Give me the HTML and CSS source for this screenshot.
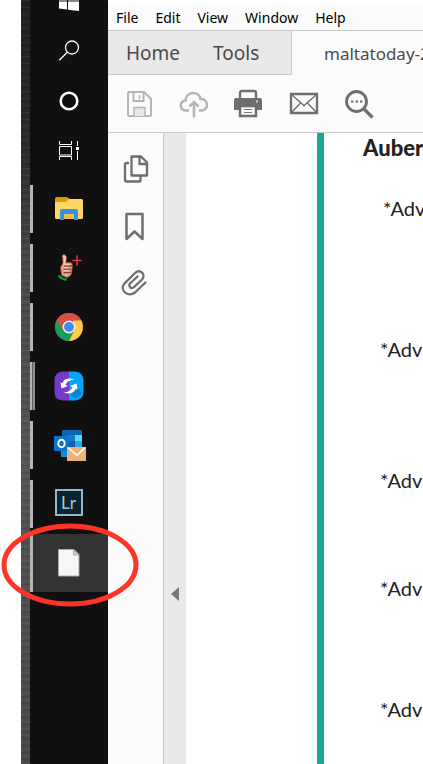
FILE: index.html
```
<!DOCTYPE html>
<html lang="en">
<head>
    <meta charset="UTF-8">
    <meta name="viewport" content="width=device-width, initial-scale=1.0">
    <title>maltatoday</title>
    <link rel="stylesheet" href="styles.css">
</head>
<body>
    <div class="screen">
        <div class="desktop-edge"></div>

        <!-- Windows taskbar -->
        <nav class="taskbar" aria-label="Taskbar">
            <button class="sys start" aria-label="Start">
                <svg width="20" height="20" viewBox="0 0 20 20" fill="#fff"><path d="M0 1.400H8V9.500H0zM9 1H20V9.500H9zM0 10.500H8V18.500L0 17.600zM9 10.500H20V20L9 18.700z"/></svg>
            </button>
            <button class="sys" aria-label="Search">
                <svg width="22" height="22" viewBox="0 0 22 22" fill="none" stroke="#fff" stroke-width="1.300"><circle cx="14" cy="7.500" r="6.500"/><path d="M9.300 12.200 1.300 20.200"/></svg>
            </button>
            <button class="sys" aria-label="Cortana">
                <svg width="22" height="22" viewBox="0 0 22 22" fill="none" stroke="#fff"><circle cx="11" cy="11" r="8.300" stroke-width="2.600"/></svg>
            </button>
            <button class="sys" aria-label="Task View">
                <svg width="22" height="22" viewBox="0 0 22 22" fill="none" stroke="#fff"><path d="M1.500 1V4.500H13.500V1M1.500 6.500H13.500V15H1.500zM1.500 20V16.500H13.500V20M19.500 1V6M19.500 11V20"/><path d="M18 7h3v3h-3z" fill="#fff" stroke="none"/></svg>
            </button>

            <div class="apps">
                <button class="app" aria-label="File Explorer">
                    <svg width="32" height="32" viewBox="0 0 32 32"><path d="M2 6q0-2 2-2h9q2 0 3 1.500L17 9H2z" fill="#df9b05"/><path d="M2 9h11l3-3h12.500Q30 6 30 8v16.500q0 1.500-1.500 1.500h-25Q2 26 2 24.500z" fill="#ffd766"/><path d="M7 27V18q0-2 2-2h14q2 0 2 2v9h-4v-6h-10v6z" fill="#3394dc"/><path d="M11 21h10v5H11z" fill="#eebf4f"/></svg>
                </button>
                <button class="app" aria-label="Thumbs Plus">
                    <svg width="32" height="32" viewBox="0 0 32 32"><path d="M9 3.500q2-2 4 0l.7 3-.7 4 4-.2q3 .6 2.600 4l-1 7.500q-2 3.500-5 3.700l-5-2-1.300-8L10 11z" fill="#e9a389" stroke="#7a3329" stroke-width=".7"/><path d="M10 4.500q1.500-1 2 1L11 12" fill="none" stroke="#ffd9c4" stroke-width="1.300"/><path d="M11 14h8M10.500 17.200h8M10.500 20.500h7.500" stroke="#873e32" stroke-width="1.300"/><path d="M11 12.600h6M11 15.700h5M11 18.900h5" stroke="#ffd2b8" stroke-width="1.200"/><path d="M5.500 23.500q3.500 4.200 8.500 4" fill="none" stroke="#159445" stroke-width="2.300"/><path d="M24 3v11M18.800 8.500h10" stroke="#861820" stroke-width="2"/><path d="M24 4v9M19.500 8.500H28" stroke="#f14b50" stroke-width=".8"/></svg>
                </button>
                <button class="app" aria-label="Chrome">
                    <svg width="32" height="32" viewBox="0 0 32 32"><circle cx="16" cy="16" r="14" fill="#d94f43"/><path d="M28 9A14 14 0 0 1 16 30l-1-8 6-6-1-7z" fill="#ffce44"/><path d="M3.900 9A14 14 0 0 0 16 30l5.300-10.500L10 19z" fill="#159d59"/><path d="M16 9.500h12.400A14 14 0 0 0 3.900 9L10.500 19.500z" fill="#d94f43"/><circle cx="16" cy="16" r="6.500" fill="#f1f3f6"/><circle cx="16" cy="16" r="5" fill="#4a87ef"/></svg>
                </button>
                <button class="app stacked" aria-label="Sync">
                    <svg width="32" height="32" viewBox="0 0 32 32"><path d="M16 1.500H9Q1.500 2.500 1.500 10v12q0 8 8 8.500H16z" fill="#743acb"/><path d="M16 1.500h6q8 .5 8.500 8.500v12q-.5 8-8.500 8.500h-6z" fill="#08a4fa"/><path d="m16 22 5 6q5 0 8-5L24 17z" fill="#0784cc"/><path d="M21.500 9.500Q12 6.500 9.500 13L7.500 12.500 8.500 18.500 15 16l-2.500-1.200Q14.500 10 21.500 9.500zM10.500 22.500q9.500 3 12-3.500l2 .5L23.500 13.500 17 16l2.500 1.200Q17.500 22 10.500 22.500z" fill="#fff"/></svg>
                </button>
                <button class="app" aria-label="Outlook">
                    <svg width="34" height="34" viewBox="0 0 34 34"><path d="M10 2h20v18H10z" fill="#0a65b0"/><path d="M16 7h7v6h-7z" fill="#167ac8"/><path d="M23 7h7v6h-7z" fill="#54dcfc"/><path d="M16 13h7v6h-7z" fill="#1261ae"/><path d="M23 13h7v6h-7z" fill="#29aaf0"/><path d="M9 17h7v12H9z" fill="#1489dc"/><rect x="2" y="8" width="15" height="15" rx="1" fill="#0875cf"/><ellipse cx="9.500" cy="15.500" rx="3.200" ry="3.800" fill="none" stroke="#fff" stroke-width="2"/><path d="M15 19h19v14H15z" fill="#eab477"/><path d="m16 19.500 9 8 8-8" fill="none" stroke="#fff" stroke-width="1.300"/></svg>
                </button>
                <button class="app" aria-label="Lightroom">
                    <svg width="32" height="32" viewBox="0 0 32 32"><rect x="3" y="2" width="26" height="25" fill="#0b232e" stroke="#a4c8df" stroke-width="1.800"/><text x="8" y="21" class="lr">Lr</text></svg>
                </button>
                <button class="app active" aria-label="Document">
                    <svg width="32" height="32" viewBox="0 0 32 32"><path d="M5.500 2.500h15.500l5 5v21.500H5.500z" fill="#f6f6f6" stroke="#aaaaa2"/><path d="M20.500 3v5H26z" fill="#d4d4d0" stroke="#999992" stroke-width=".7"/></svg>
                    <svg class="marker" width="138" height="84" viewBox="0 0 138 84"><ellipse cx="69" cy="42" rx="66" ry="39" fill="none" stroke="#ff3429" stroke-width="5"/></svg>
                </button>
            </div>
        </nav>

        <!-- PDF reader window -->
        <div class="window">
            <div class="menubar">
                <button>File</button>
                <button>Edit</button>
                <button>View</button>
                <button>Window</button>
                <button>Help</button>
            </div>
            <div class="tabs">
                <div class="tabs-main">
                    <button>Home</button>
                    <button>Tools</button>
                </div>
                <button class="tab-file">maltatoday-2</button>
            </div>
            <div class="toolbar">
                <button aria-label="Save">
                    <svg width="30" height="30" viewBox="0 0 30 30" fill="none" stroke="#b5b5b5" stroke-width="2"><path d="M5 3H20L27 10V26Q27 27 26 27H5Q4 27 4 26V4Q4 3 5 3z"/><path d="M9.500 3V12H19.500V3"/><path d="M10 27V18.500H21V27" fill="#e8e8e8" stroke-width="1.500"/><path d="M15.500 6V10" stroke-width="1.500"/></svg>
                </button>
                <button aria-label="Upload">
                    <svg width="30" height="30" viewBox="0 0 30 30" fill="none" stroke="#b5b5b5" stroke-width="2.500"><path d="M10 21.500H7A5 5 0 0 1 6.500 11.500C7 2 20 1.500 21.500 10A5.500 5.500 0 0 1 23 21.500H20"/><path d="M15 28.500V13M10.500 17.500 15 13 19.500 17.500"/></svg>
                </button>
                <button aria-label="Print">
                    <svg width="30" height="30" viewBox="0 0 30 30"><path d="M6 10V4q0-2 2-2h12q2 0 2 2v6" fill="#fbfbfb" stroke="#6e6e6e" stroke-width="2.400"/><path d="M2 9h24q2 0 2 2v9q0 1-1 1H1q-1 0-1-1v-9q0-2 2-2z" fill="#6e6e6e"/><path d="M22 11.500h2v2h-2z" fill="#ccc"/><path d="M6 17h16v10H6z" fill="#fbfbfb" stroke="#6e6e6e" stroke-width="2.400"/><path d="M10 20.500h8M10 23.500h8" stroke="#777" stroke-width="1"/></svg>
                </button>
                <button aria-label="Mail">
                    <svg width="30" height="30" viewBox="0 0 30 30" fill="none" stroke="#6e6e6e"><path d="M2 5H28V24H2z" stroke-width="2.300"/><path d="m3 6 12 10.500L27 6M3 23l8.500-9M27 23l-8.500-9" stroke-width="1.400"/></svg>
                </button>
                <button aria-label="Find">
                    <svg width="30" height="30" viewBox="0 0 30 30" fill="none" stroke="#6e6e6e"><circle cx="12.500" cy="12.500" r="10" stroke-width="2.800"/><path d="m20 20 8.500 8.500" stroke-width="3.200"/><path d="M7 12.500h2.500M11.500 12.500H14M16 12.500h2.500" stroke-width="2.200"/></svg>
                </button>
            </div>
            <div class="workspace">
                <div class="sidebar">
                    <button aria-label="Page thumbnails">
                        <svg width="30" height="30" viewBox="0 0 30 30" fill="none" stroke="#6e6e6e" stroke-width="2.300"><path d="M8 9H5.500Q4 9 4 10.500V26q0 1.500 1.500 1.500H18q1.500 0 1.500-1.500v-4"/><path d="M10.500 2.500H20L26 8.500V21.500H10.500z" stroke-linejoin="round"/><path d="M18.500 2.500V10H26"/></svg>
                    </button>
                    <button aria-label="Bookmarks">
                        <svg width="30" height="30" viewBox="0 0 30 30" fill="none" stroke="#6e6e6e" stroke-width="2.500"><path d="M5.500 3H21.500V28L13.500 20.500 5.500 28z" stroke-linejoin="round"/></svg>
                    </button>
                    <button aria-label="Attachments">
                        <svg width="30" height="30" viewBox="0 0 30 30" fill="none" stroke="#6e6e6e" stroke-width="2.300" stroke-linecap="round"><path d="M24.500 14.500 14 24.500C7 30-2 22 3.500 15.500L14 5C19 .5 25.500 6.500 21 11.500L13 19.200C10 21.500 6.500 17.500 9.500 15L16.500 8.500"/></svg>
                    </button>
                </div>
                <button class="splitter" aria-label="Collapse panel">
                    <svg width="8" height="14" viewBox="0 0 8 14"><path d="M8 0v14L0 7z" fill="#777"/></svg>
                </button>
                <main class="document">
                    <div class="page">
                        <h1>Auber</h1>
                        <p class="first">*Adv</p>
                        <p class="gap-xl">*Adv</p>
                        <p class="gap-lg">*Adv</p>
                        <p class="gap-sm">*Adv</p>
                        <p class="gap-md">*Adv</p>
                    </div>
                </main>
            </div>
        </div>
    </div>
</body>
</html>
```
FILE: styles.css
```
* { box-sizing: border-box; }
body { margin: 0; background: #fff; font-family: "Noto Sans", sans-serif; }
button { margin: 0; padding: 0; border: 0; background: none; font: inherit; color: inherit; }
svg { display: block; }

.screen { display: flex; min-height: 100vh; padding-left: 21px; overflow: hidden; }
.desktop-edge {
    flex: 0 0 9px;
    background:
        repeating-linear-gradient(178deg, rgba(255,255,255,0.06) 0 1px, transparent 1px 3px, rgba(0,0,0,0.12) 3px 4px, transparent 4px 7px),
        linear-gradient(#202020, #2c2c2c 20%, #484848 35%, #555 60%, #484848);
}

/* taskbar */
.taskbar { flex: 0 0 78px; background: #101010; }
.sys { display: flex; width: 100%; height: 50px; align-items: center; justify-content: center; }
.start { height: 26px; align-items: flex-start; }
.start svg { margin-top: -9px; }
.apps { display: flex; flex-direction: column; gap: 1px; padding-top: 4px; }
.app { position: relative; display: flex; width: 100%; height: 58px; align-items: center; justify-content: center; }
.app::before { content: ""; position: absolute; left: 0; top: 5px; bottom: 5px; width: 3px; background: #b5b5b5; }
.stacked::before { width: 5px; background: linear-gradient(90deg, #b5b5b5 2px, #606060 2px 3px, #909090 3px); }
.active { background: #333; }
.active::before { top: 0; bottom: 0; }
.marker { position: absolute; left: 50%; top: 50%; margin: -40px 0 0 -68px; z-index: 2; }
.lr { font: 17px Lato, sans-serif; fill: #a4c8df; }

/* reader window */
.window { flex: 1; min-width: 0; display: flex; flex-direction: column; margin-top: 5px; background: #fbfbfb; }
.menubar { display: flex; gap: 17px; height: 25px; padding-left: 8px; font-size: 14px; line-height: 25px; color: #000; }
.tabs { display: flex; height: 45px; border-top: 1px solid #c8c8c8; font-size: 19px; color: #4b4b4b; }
.tabs-main { display: flex; flex: 0 0 184px; gap: 33px; padding-left: 18px; background: #e9e9e9; border-right: 1px solid #c8c8c8; border-bottom: 1px solid #c8c8c8; }
.tab-file { padding-left: 32px; font-size: 17px; white-space: nowrap; }
.toolbar { display: flex; gap: 25px; height: 58px; align-items: center; padding-left: 16px; border-bottom: 1px solid #c8c8c8; }
.workspace { flex: 1; display: flex; }
.sidebar { flex: 0 0 56px; display: flex; flex-direction: column; align-items: center; gap: 27px; padding-top: 21px; border-right: 1px solid #c8c8c8; }
.splitter { flex: 0 0 22px; display: flex; align-items: center; justify-content: center; padding-top: 291px; background: #e9e9e9; }

/* document */
.document { flex: 1; min-width: 0; padding-left: 131px; background: #fff; display: flex; }
.page { flex: 1; min-width: 0; overflow: hidden; border-left: 7px solid #1ca896; padding-left: 39px; font-family: Lato, sans-serif; color: #222; white-space: nowrap; }
h1 { margin: 0; font-size: 22px; line-height: 30px; font-weight: 900; }
p { margin: 0; padding-left: 17px; font-size: 20px; line-height: 24px; }
.first { margin-top: 33px; padding-left: 20px; }
.gap-xl { margin-top: 117px; }
.gap-lg { margin-top: 107px; }
.gap-md { margin-top: 97px; }
.gap-sm { margin-top: 84px; }
```
